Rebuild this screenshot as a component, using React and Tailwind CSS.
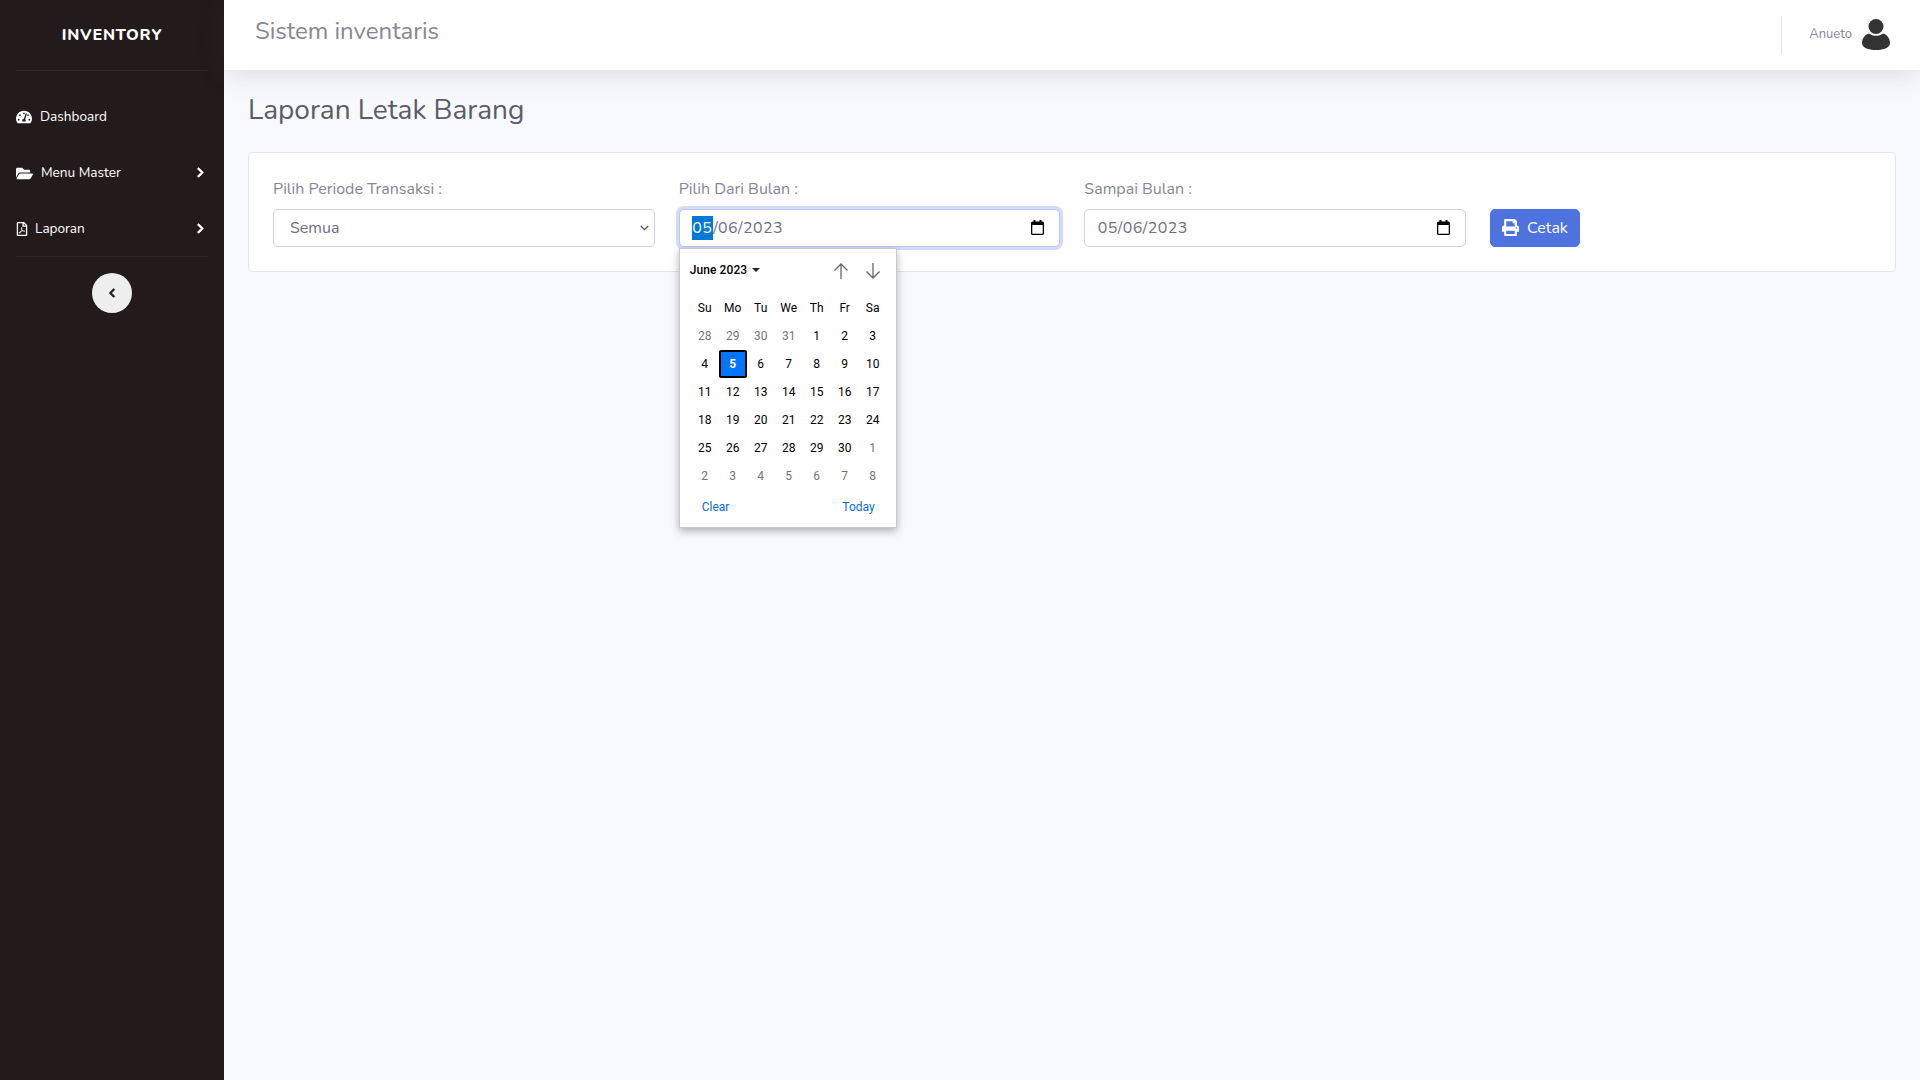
import { FaChevronLeft, FaChevronRight, FaFolderOpen, FaPrint, FaRegFilePdf, FaTachometerAlt } from 'react-icons/fa';

const hari = ['Su', 'Mo', 'Tu', 'We', 'Th', 'Fr', 'Sa'];

// [tanggal, bulan ini?]
const tanggal = [
  [28, 0], [29, 0], [30, 0], [31, 0], [1, 1], [2, 1], [3, 1],
  [4, 1], [5, 1], [6, 1], [7, 1], [8, 1], [9, 1], [10, 1],
  [11, 1], [12, 1], [13, 1], [14, 1], [15, 1], [16, 1], [17, 1],
  [18, 1], [19, 1], [20, 1], [21, 1], [22, 1], [23, 1], [24, 1],
  [25, 1], [26, 1], [27, 1], [28, 1], [29, 1], [30, 1], [1, 0],
  [2, 0], [3, 0], [4, 0], [5, 0], [6, 0], [7, 0], [8, 0],
];

function IkonKalender() {
  return (
    <svg width="13" height="15" viewBox="0 0 13 15" className="shrink-0">
      <path d="M2.500 0h2v1.500h4V0h2v1.500h1A1.500 1.500 0 0 1 13 3v10.500a1.500 1.500 0 0 1-1.500 1.500h-10A1.500 1.500 0 0 1 0 13.500V3a1.500 1.500 0 0 1 1.500-1.500h1zM1.300 5v8.700h10.400V5z" fill="#000" />
    </svg>
  );
}

function IkonUser() {
  return (
    <svg width="28" height="31" viewBox="0 0 28 31">
      <circle cx="14" cy="7.500" r="7.500" fill="#333" />
      <path d="M7 14.500c2 1.600 4.400 2.300 7 2.300s5-.7 7-2.300c4 1.200 7 5 7 9.500 0 4.500-6 7-14 7S0 28.500 0 24c0-4.500 3-8.300 7-9.500z" fill="#333" />
    </svg>
  );
}

function MenuItem({ icon, label, gap, arrow }) {
  return (
    <div className="h-14 pt-[2px] flex items-center pl-4 pr-[18px] text-white text-[13.6px]">
      {icon}
      <span className={gap}>{label}</span>
      {arrow && <FaChevronRight className="ml-auto mb-[2px] text-[11px]" stroke="currentColor" strokeWidth={40} />}
    </div>
  );
}

function Sidebar() {
  return (
    <aside className="w-[224px] shrink-0 bg-[#231b1b] flex flex-col">
      <div className="h-[70px] flex items-center justify-center text-white font-extrabold text-[16px] tracking-[0.8px]">INVENTORY</div>
      <div className="mx-4 border-t border-white/5"></div>
      <div className="pt-[17px]">
        <MenuItem icon={<FaTachometerAlt className="text-[16px]" />} label="Dashboard" gap="ml-[8px]" />
        <MenuItem icon={<FaFolderOpen className="text-[17px]" />} label="Menu Master" gap="ml-[8px]" arrow />
        <MenuItem icon={<FaRegFilePdf className="text-[14px] -ml-[1px] mb-[1px]" />} label="Laporan" gap="ml-[6px]" arrow />
      </div>
      <div className="mx-4 border-t border-white/5"></div>
      <div className="flex justify-center pt-[16px]">
        <button className="w-10 h-10 rounded-full bg-[#eeeeee] flex items-center justify-center text-[#231b1b] pr-[1px]">
          <FaChevronLeft className="text-[10px]" stroke="currentColor" strokeWidth={40} />
        </button>
      </div>
    </aside>
  );
}

function Kalender() {
  return (
    <div className="absolute left-0 top-[71px] z-10 w-[218px] h-[280px] bg-white border border-[#c9c9c9] shadow-[0_3px_8px_rgba(0,0,0,0.3)] font-['Roboto',sans-serif] tracking-normal text-black pl-[10px] pr-[10px]">
      <div className="h-[43px] mb-[2px] flex items-center">
        <span className="text-[12px] font-medium tracking-[0.1px]">June 2023</span>
        <span className="ml-[5px] w-0 h-0 border-x-[4px] border-x-transparent border-t-[4px] border-t-[#222]"></span>
        <svg width="18" height="18" viewBox="0 0 18 18" className="ml-auto mr-[14px] mt-[2px]" fill="none" stroke="#666" strokeWidth="1.3">
          <path d="M9 17V2M2.500 8.500 9 2l6.500 6.500" />
        </svg>
        <svg width="18" height="18" viewBox="0 0 18 18" className="mr-[4px] mt-[2px]" fill="none" stroke="#666" strokeWidth="1.3">
          <path d="M9 1v15M2.500 9.500 9 16l6.500-6.500" />
        </svg>
      </div>
      <div className="grid grid-cols-[repeat(7,28px)] pl-[1px] text-[12px]">
        {hari.map((h) => (
          <div key={h} className="h-[28px] flex items-center justify-center">{h}</div>
        ))}
        {tanggal.map(([t, ini], i) => (
          <div
            key={i}
            className={
              t === 5 && ini
                ? 'h-[28px] flex items-center justify-center bg-[#0075ff] border-2 border-black rounded-[2px] text-white font-bold'
                : `h-[28px] flex items-center justify-center ${ini ? 'text-black' : 'text-[#767676]'}`
            }
          >
            {t}
          </div>
        ))}
      </div>
      <div className="flex justify-between pl-[12px] pr-[11px] pt-[8px] text-[12px] text-[#0b6bd3]">
        <span>Clear</span>
        <span>Today</span>
      </div>
    </div>
  );
}

function KolomTanggal({ label, fokus, children }) {
  return (
    <div className="w-[381.67px] relative">
      <label className="block text-[16px] leading-[24px] mb-2 text-[#858796]">{label}</label>
      <div
        className={`h-[38px] flex items-center justify-between bg-white border rounded-[5px] pl-[12.500px] pr-[15px] text-[#6e707e] tracking-[0.4px] ${
          fokus ? 'border-[#bac8f3] shadow-[0_0_0_3px_rgba(78,115,223,0.25)]' : 'border-[#d1d3e2]'
        }`}
      >
        {children}
        <IkonKalender />
      </div>
    </div>
  );
}

export default function App() {
  return (
    <div className="min-h-screen flex font-['Nunito','Noto_Sans',sans-serif] bg-[#f8f9fc]">
      <Sidebar />
      <div className="flex-1 flex flex-col">
        <header className="h-[70px] bg-white shadow-[0_4px_28px_rgba(58,59,69,0.15)] flex items-center pl-[31px] pr-[30px]">
          <h1 className="text-[24px] leading-[28px] text-[#858796] mb-[9px]">Sistem inventaris</h1>
          <div className="ml-auto flex items-center h-[38px] border-l border-[#e3e6f0] pl-[27px] mt-[-1px]">
            <span className="text-[13px] text-[#858796] mr-[10px]">Anueto</span>
            <IkonUser />
          </div>
        </header>
        <main className="px-6 pt-6">
          <h2 className="text-[28px] leading-[33.600px] text-[#5a5c69] mb-[24px]">Laporan Letak Barang</h2>
          <section className="h-[120px] bg-white border border-[#e3e6f0] rounded-[5px] p-6 flex gap-6 items-start">
            <div className="w-[381.67px]">
              <label className="block text-[16px] leading-[24px] mb-2 text-[#858796]">Pilih Periode Transaksi :</label>
              <div className="relative">
                <select className="w-full h-[38px] appearance-none bg-white border border-[#d1d3e2] rounded-[5px] pl-4 text-[16px] text-[#6e707e]">
                  <option>Semua</option>
                </select>
                <svg width="9" height="6" viewBox="0 0 9 6" className="absolute right-[6px] top-[16px]" fill="none" stroke="#555" strokeWidth="1.300">
                  <path d="M.8 1 4.500 4.700 8.200 1" />
                </svg>
              </div>
            </div>
            <KolomTanggal label="Pilih Dari Bulan :" fokus>
              <span>
                <span className="inline-block h-[24px] leading-[24px] pr-[1px] bg-[#0078d7] text-white">05</span>/06/2023
              </span>
              <Kalender />
            </KolomTanggal>
            <KolomTanggal label="Sampai Bulan :">
              <span>05/06/2023</span>
            </KolomTanggal>
            <button className="mt-[32px] h-[38px] w-[90px] bg-[#4e73df] border border-[#4e73df] rounded-[5px] text-white flex items-center justify-center gap-[8px]">
              <FaPrint className="text-[17px]" />
              Cetak
            </button>
          </section>
        </main>
      </div>
    </div>
  );
}
